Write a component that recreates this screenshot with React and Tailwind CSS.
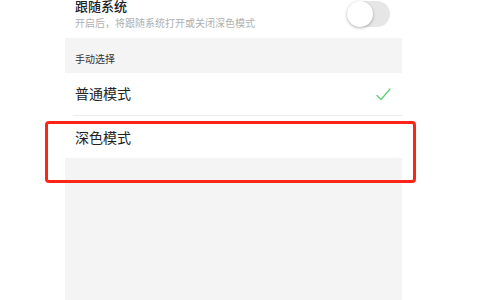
const font = { fontFamily: '"Liberation Sans", "Noto Sans CJK SC", sans-serif' };

function Toggle() {
    return (
        <div className="relative w-[43px] h-[26px] rounded-full bg-[#e6e6e6]">
            <div className="absolute left-0 top-0 w-[26px] h-[26px] rounded-full bg-white shadow-[0_1px_3px_rgba(0,0,0,0.3)]"/>
        </div>
    );
}

function Check() {
    return (
        <svg width="15" height="13" viewBox="0 0 15 13" fill="none">
            <path d="M1 7.5 L5 11.5 L14 1" stroke="#5fcf72" strokeWidth="1.3" strokeLinecap="round" strokeLinejoin="round"/>
        </svg>
    );
}

export default function App() {
    return (
        <div className="relative w-[480px] h-[300px] bg-white overflow-hidden" style={font}>
            <div className="ml-[65px] w-[337px] h-full flex flex-col">
                <div className="h-[38px] flex justify-between pl-[10px] pr-[12px]">
                    <div className="flex flex-col">
                        <span className="text-[13px] leading-[14px] text-[#222] font-medium">跟随系统</span>
                        <span className="mt-[5px] text-[10px] leading-[10px] text-[#b0b0b0]">开启后，将跟随系统打开或关闭深色模式</span>
                    </div>
                    <div className="pt-[1px]">
                        <Toggle/>
                    </div>
                </div>
                <div className="h-[35px] bg-[#f4f4f4] flex items-end pl-[10px] pb-[8px]">
                    <span className="text-[10px] leading-[10px] text-[#333]">手动选择</span>
                </div>
                <div className="h-[42px] flex items-center justify-between pl-[10px] pr-[11px]">
                    <span className="text-[14px] leading-[14px] text-[#222] -mt-[1px]">普通模式</span>
                    <Check/>
                </div>
                <div className="ml-[8px] h-px bg-[#ececec]"/>
                <div className="h-[42px] flex items-center pl-[10px]">
                    <span className="text-[14px] leading-[14px] text-[#222] mt-[1px]">深色模式</span>
                </div>
                <div className="flex-1 bg-[#f4f4f4]"/>
            </div>
            <div className="absolute left-[45px] top-[121px] w-[371px] h-[62px] border-[3px] border-[#ff2418] rounded-[4px]"/>
        </div>
    );
}
